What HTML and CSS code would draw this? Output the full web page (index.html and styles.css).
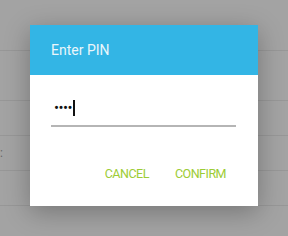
FILE: index.html
```
<!DOCTYPE html>
<html>
    <head>
        <title>Enter PIN</title>
        <link rel="stylesheet" href="styles.css">
    </head>
    <body>
        <div class="list">
            <div class="row row1"></div>
            <div class="row row2"></div>
            <div class="row row3"></div>
            <div class="row row4"><span class="label">:</span></div>
            <div class="row row5"></div>
        </div>
        <div class="dialog">
            <div class="title">Enter PIN</div>
            <div class="content">
                <div class="field">
                    <span class="dots">&bull;&bull;&bull;&bull;</span><span class="cursor"></span>
                </div>
            </div>
            <div class="buttons">
                <button class="button">CANCEL</button>
                <button class="button">CONFIRM</button>
            </div>
        </div>
    </body>
</html>
```

FILE: styles.css
```
body {
    width: 288px;
    height: 236px;
    margin: 0;
    overflow: hidden;
    font-family: Roboto, "Liberation Sans", sans-serif;
    background-color: #a3a3a3;
}
.row {
    border-bottom: 1px solid #979797;
    box-sizing: border-box;
}
.row1 {
    height: 51px;
}
.row2 {
    height: 50px;
}
.row3 {
    height: 35px;
}
.row4 {
    height: 35px;
    padding-top: 10px;
}
.row5 {
    height: 35px;
}
.label {
    display: block;
    margin-left: 0;
    font-size: 12px;
    line-height: 14px;
    color: #666666;
}
.dialog {
    position: absolute;
    left: 30px;
    top: 25px;
    width: 228px;
    height: 181px;
    background-color: #ffffff;
    box-shadow: 0 6px 24px rgba(0, 0, 0, 0.28);
}
.title {
    height: 50px;
    padding-left: 21px;
    box-sizing: border-box;
    background-color: #33b5e5;
    color: #eaf6fb;
    font-size: 14px;
    line-height: 50px;
}
.content {
    padding: 25px 22px 0 21px;
}
.field {
    height: 25px;
    border-bottom: 2px solid #b5b5b5;
    display: flex;
    align-items: flex-start;
    padding-left: 3px;
}
.dots {
    font-size: 15px;
    line-height: 17px;
    letter-spacing: -0.6px;
    color: #111111;
}
.cursor {
    width: 2px;
    height: 16px;
    margin-left: 1px;
    background-color: #111111;
}
.buttons {
    display: flex;
    justify-content: flex-end;
    padding: 40px 32px 0 0;
    gap: 26px;
}
.button {
    padding: 0;
    border: none;
    background: none;
    font-family: Roboto, "Liberation Sans", sans-serif;
    font-size: 12.5px;
    line-height: 14px;
    letter-spacing: -0.5px;
    color: #9ccc35;
}
```
